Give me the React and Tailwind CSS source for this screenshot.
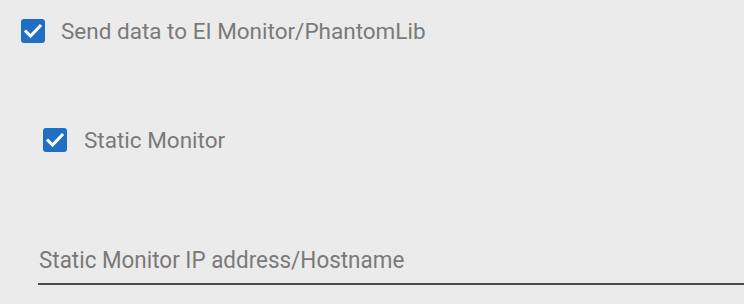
import React, { useState } from 'react';

function Check({ checked, onChange }) {
  return (
    <button
      onClick={onChange}
      className={`w-[24px] h-[24px] rounded-[3px] flex items-center justify-center shrink-0 ${checked ? 'bg-[#1f6fc5]' : 'border-2 border-[#777]'}`}
    >
      {checked && (
        <svg viewBox="0 0 24 24" className="w-[24px] h-[24px]" fill="none" stroke="white" strokeWidth="3" strokeLinecap="square">
          <path d="M5 12.5l4.5 4.5 9.5-10" />
        </svg>
      )}
    </button>
  );
}

export default function App() {
  const [send, setSend] = useState(true);
  const [staticMon, setStaticMon] = useState(true);
  const [host, setHost] = useState('');

  return (
    <div className="w-[744px] h-[304px] bg-[#ebebeb] overflow-hidden font-['Roboto',sans-serif] text-[#7a7a7a]">
      <div className="pt-[19px] pl-[21px] flex items-center gap-[16px]">
        <Check checked={send} onChange={() => setSend(!send)} />
        <span className="text-[22.5px] leading-[24px]">Send data to EI Monitor/PhantomLib</span>
      </div>

      <div className="pt-[85px] pl-[43px] flex items-center gap-[17px]">
        <Check checked={staticMon} onChange={() => setStaticMon(!staticMon)} />
        <span className="text-[22.5px] leading-[24px]">Static Monitor</span>
      </div>

      <div className="mt-[93px] ml-[38px] relative border-b-2 border-[#4a4a4a]">
        {!host && (
          <span className="absolute left-[1px] top-0 leading-[30px] text-[24px] origin-left scale-x-[0.935] whitespace-nowrap pointer-events-none">
            Static Monitor IP address/Hostname
          </span>
        )}
        <input
          value={host}
          onChange={(e) => setHost(e.target.value)}
          className="w-full h-[38px] bg-transparent outline-none text-[20px] pl-[1px] text-[#333]"
        />
      </div>
    </div>
  );
}
